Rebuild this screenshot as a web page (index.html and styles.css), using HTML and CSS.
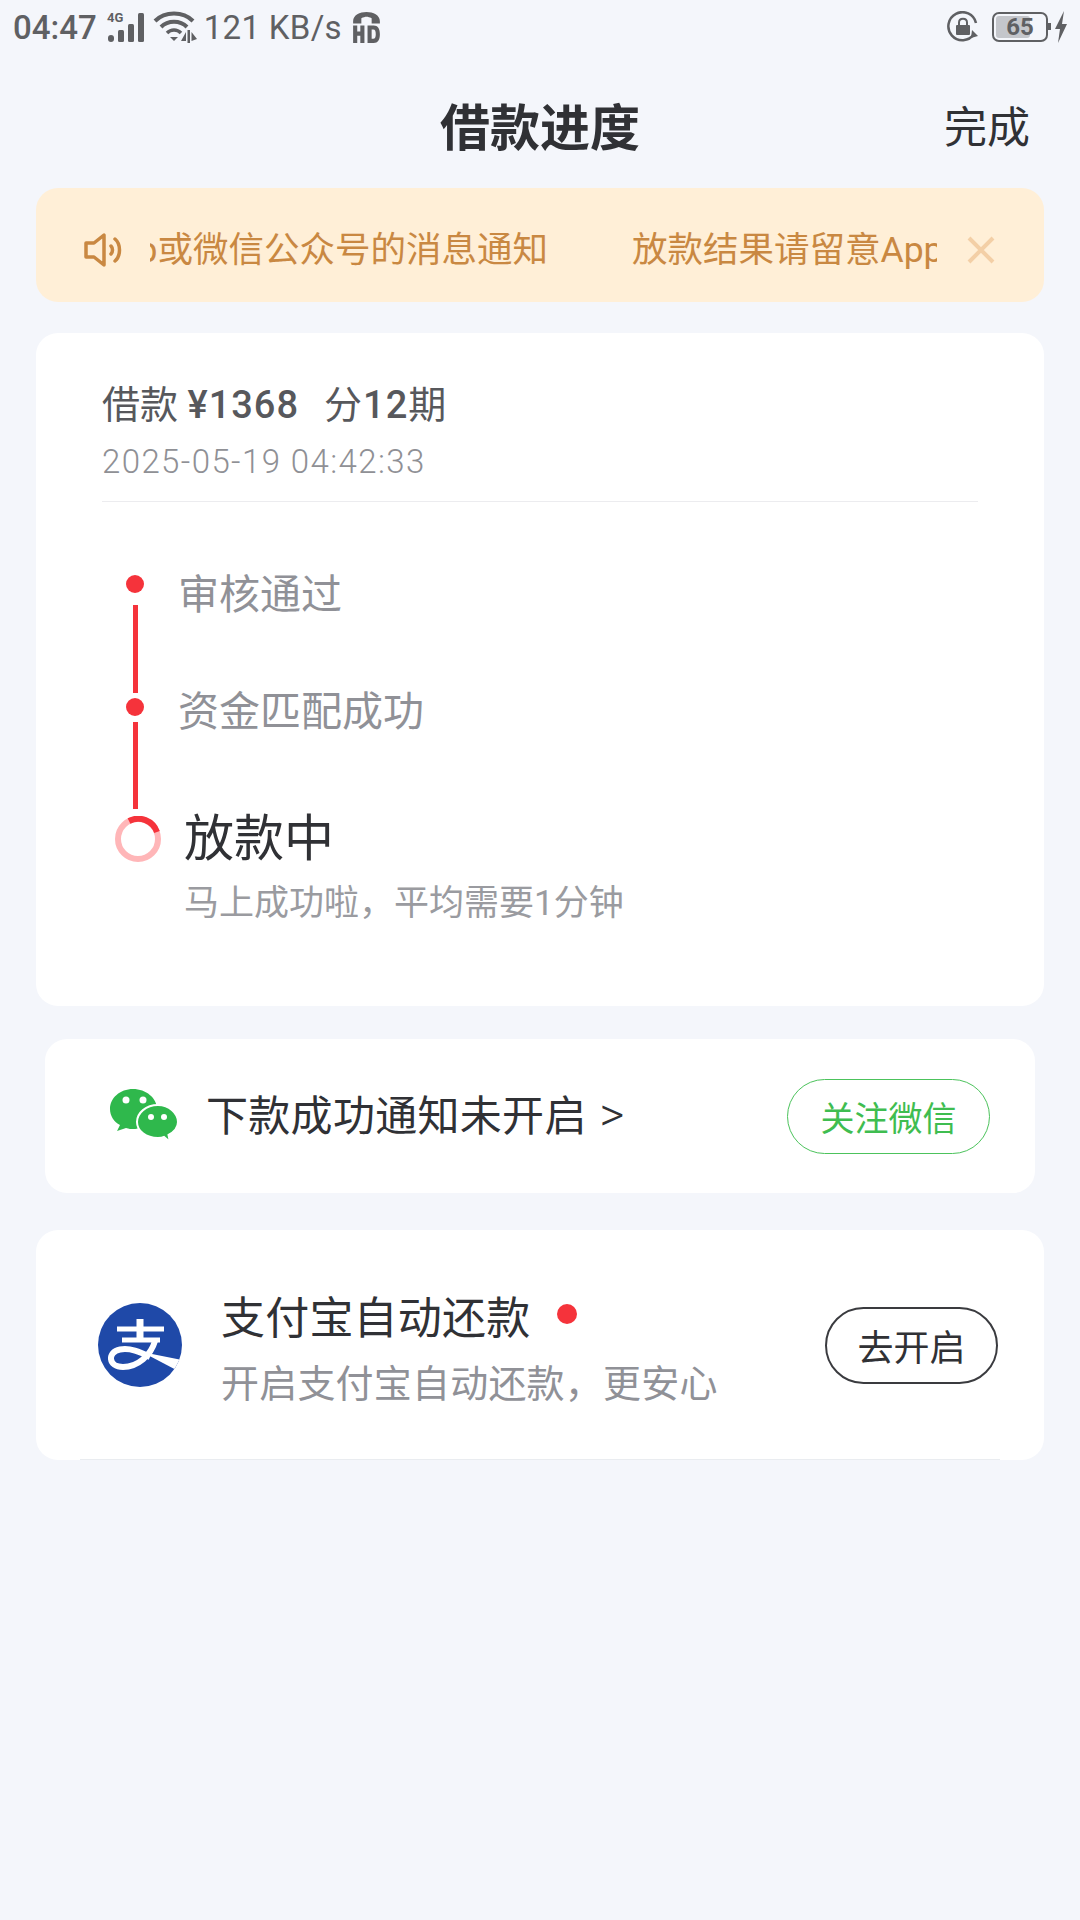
FILE: index.html
```html
<!DOCTYPE html>
<html lang="zh-CN">
<head>
    <meta charset="UTF-8">
    <meta name="viewport" content="width=device-width, initial-scale=1.0">
    <title>借款进度</title>
    <link rel="stylesheet" href="styles.css">
</head>
<body>
    <!-- Status bar -->
    <div class="status-bar">
        <div class="status-left">
            <span class="status-time">04:47</span>
            <svg class="icon-signal" viewBox="0 0 40 32">
                <text x="1" y="11" class="signal-label">4G</text>
                <rect x="2" y="24" width="6" height="7" rx="3" fill="#5f6063"/>
                <rect x="12" y="19" width="6" height="12" rx="1.5" fill="#5f6063"/>
                <rect x="22" y="13" width="6" height="18" rx="1.5" fill="#5f6063"/>
                <rect x="32" y="2" width="6" height="29" rx="1.5" fill="#5f6063"/>
            </svg>
            <svg class="icon-wifi" viewBox="0 0 44 32">
                <path d="M2 10 C12 0 30 0 40 10" fill="none" stroke="#5f6063" stroke-width="4"/>
                <path d="M8 16 C15 9 27 9 34 16" fill="none" stroke="#5f6063" stroke-width="4"/>
                <path d="M14 22 C18 18 24 18 28 22" fill="none" stroke="#5f6063" stroke-width="3.5"/>
                <path d="M17 26 L25 26 L21 30 Z" fill="#5f6063"/>
                <path d="M28 30 L33 21 L33 30 Z M34.500 19 L34.500 32 L37 32 L37 19 Z M38.500 21 L44 28 L38.500 30 Z" fill="#5f6063"/>
            </svg>
            <span class="status-speed">121 KB/s</span>
            <svg class="icon-hd" viewBox="0 0 30 34">
                <path d="M2 11 C2 -1 28 -1 28 11 L28 13 L20 13 L20 8 C16 6 14 6 10 8 L10 13 L2 13 Z" fill="#5f6063"/>
                <path d="M2 15 L6 15 L6 21 L9 21 L9 15 L13 15 L13 32 L9 32 L9 25 L6 25 L6 32 L2 32 Z" fill="#5f6063"/>
                <path d="M16 15 L22 15 C26 15 28 18 28 23.5 C28 29 26 32 22 32 L16 32 Z M20 19 L20 28 L21.500 28 C23.500 28 24 26 24 23.500 C24 21 23.500 19 21.500 19 Z" fill="#5f6063" fill-rule="evenodd"/>
            </svg>
        </div>
        <div class="status-right">
            <svg class="icon-lock" viewBox="0 0 32 32">
                <path d="M27 23 A14 14 0 1 1 29 12" fill="none" stroke="#5f6063" stroke-width="2.500"/>
                <path d="M25 19 L31 25 L24 27 Z" fill="#5f6063"/>
                <rect x="9" y="14" width="14" height="10" rx="1" fill="#5f6063"/>
                <path d="M12 14 L12 11.500 C12 6.500 20 6.500 20 11.500 L20 14" fill="none" stroke="#5f6063" stroke-width="2"/>
            </svg>
            <div class="battery">
                <div class="battery-fill"></div>
                <span class="battery-num">65</span>
            </div>
            <svg class="icon-charge" viewBox="0 0 20 32">
                <rect x="0" y="12" width="3" height="7" fill="#5f6063"/>
                <path d="M16 0 L7 18 L12 18 L10 32 L19 13 L14 13 Z" fill="#5f6063"/>
            </svg>
        </div>
    </div>

    <!-- Nav -->
    <div class="nav">
        <h1 class="nav-title">借款进度</h1>
        <span class="nav-done">完成</span>
    </div>

    <div class="page">
        <!-- Notice -->
        <div class="notice">
            <svg class="notice-icon" viewBox="0 0 42 34">
                <path d="M3 10 L11 10 L21 2 L21 32 L11 24 L3 24 Z" fill="none" stroke="#c98842" stroke-width="3.500" stroke-linejoin="round"/>
                <path d="M28 13 C30 15 30 19 28 21" fill="none" stroke="#c98842" stroke-width="3.500" stroke-linecap="round"/>
                <path d="M32 6 C38 11 38 23 32 28" fill="none" stroke="#c98842" stroke-width="3.500" stroke-linecap="round"/>
            </svg>
            <div class="notice-window">
                <div class="notice-track">
                    <span>放款结果请留意App或微信公众号的消息通知</span>
                    <span>放款结果请留意App或微信公众号的消息通知</span>
                </div>
            </div>
            <svg class="notice-close" viewBox="0 0 28 28">
                <path d="M2 2 L26 26 M26 2 L2 26" stroke="#f3cfa6" stroke-width="4"/>
            </svg>
        </div>

        <!-- Progress card -->
        <div class="card progress-card">
            <div class="loan-title">借款 <b>¥1368</b><span class="loan-term">分<b>12</b>期</span></div>
            <div class="loan-date">2025-05-19 04:42:33</div>
            <div class="divider"></div>

            <div class="steps">
                <div class="step">
                    <div class="rail">
                        <span class="dot"></span>
                        <span class="line line-first"></span>
                    </div>
                    <div class="step-text step-text-first">审核通过</div>
                </div>
                <div class="step">
                    <div class="rail">
                        <span class="dot"></span>
                        <span class="line line-second"></span>
                    </div>
                    <div class="step-text">资金匹配成功</div>
                </div>
                <div class="step step-current">
                    <svg class="ring" viewBox="0 0 46 46">
                        <circle cx="23" cy="23" r="20" fill="none" stroke="#ffb6b8" stroke-width="6"/>
                        <path d="M14 5 A20 20 0 0 1 42 16" fill="none" stroke="#f5333b" stroke-width="6"/>
                    </svg>
                    <div>
                        <div class="current-title">放款中</div>
                        <div class="current-sub">马上成功啦，平均需要1分钟</div>
                    </div>
                </div>
            </div>
        </div>

        <!-- WeChat -->
        <div class="card wechat-card">
            <svg class="wechat-icon" viewBox="0 0 70 58">
                <path d="M25 2 C12 2 2 11 2 22 C2 29 6 35 12 38 L9 44 L18 41 C21 42 23 42 25 42 C38 42 49 33 49 22 C49 11 38 2 25 2 Z" fill="#2fb84c"/>
                <path d="M50 18 C38 18 29 26 29 35 C29 44 38 51 50 51 C52 51 54 51 56 50 L62 55 L60.500 48 C66 45 70 40 70 35 C70 26 61 18 50 18 Z" fill="#2fb84c" stroke="#fff" stroke-width="2"/>
                <circle cx="18" cy="13" r="3.500" fill="#fff"/>
                <circle cx="35" cy="13" r="3.500" fill="#fff"/>
                <circle cx="43" cy="30" r="3" fill="#fff"/>
                <circle cx="56" cy="30" r="3" fill="#fff"/>
            </svg>
            <div class="wechat-text">下款成功通知未开启 <span class="wechat-arrow">&gt;</span></div>
            <div class="btn-follow">关注微信</div>
        </div>

        <!-- Alipay -->
        <div class="card alipay-card">
            <svg class="alipay-icon" viewBox="0 0 84 84">
                <defs>
                    <clipPath id="alipayClip"><circle cx="42" cy="42" r="42"/></clipPath>
                </defs>
                <circle cx="42" cy="42" r="42" fill="#1f49a8"/>
                <g clip-path="url(#alipayClip)">
                    <g fill="none" stroke="#fff">
                        <path d="M19 26 L66 26" stroke-width="5"/>
                        <path d="M42 16 L42 37" stroke-width="7"/>
                        <path d="M24 37 L62 37" stroke-width="5"/>
                        <path d="M57 38 C53 52 40 64 25 64 C10 64 9 49 22 46.500 C32 44.500 42 49 52 54" stroke-width="6"/>
                    </g>
                    <path d="M44 49 L84 57 L84 70 Z" fill="#fff"/>
                </g>
            </svg>
            <div class="alipay-info">
                <div class="alipay-title">支付宝自动还款<span class="red-dot"></span></div>
                <div class="alipay-sub">开启支付宝自动还款，更安心</div>
            </div>
            <div class="btn-open">去开启</div>
        </div>
    </div>
</body>
</html>
```

FILE: styles.css
```css
* {
    margin: 0;
    padding: 0;
    box-sizing: border-box;
    font-family: Roboto, 'Noto Sans CJK SC', sans-serif;
}

body {
    background-color: #f4f6fb;
    color: #303135;
    width: 1080px;
    min-height: 1920px;
}

/* Status bar */
.status-bar {
    height: 54px;
    padding: 0 12px 0 13px;
    display: flex;
    justify-content: space-between;
    align-items: center;
    color: #5f6063;
}

.status-left,
.status-right {
    display: flex;
    align-items: center;
}

.status-time {
    font-size: 33px;
    font-weight: 500;
    line-height: 1;
}

.status-speed {
    font-size: 33px;
    line-height: 1;
    margin-left: 7px;
    letter-spacing: 0.3px;
}

.icon-signal {
    width: 40px;
    height: 32px;
    margin-left: 9px;
    overflow: visible;
}

.signal-label {
    font-size: 13px;
    font-weight: 700;
    fill: #5f6063;
}

.icon-wifi {
    width: 44px;
    height: 32px;
    margin-left: 7px;
}

.icon-hd {
    width: 31px;
    height: 35px;
    margin-left: 9px;
}

.icon-lock {
    width: 32px;
    height: 32px;
}

.battery {
    position: relative;
    width: 56px;
    height: 30px;
    margin-left: 13px;
    border: 2.5px solid #5f6063;
    border-radius: 7px;
    display: flex;
    align-items: center;
    justify-content: center;
}

.battery-fill {
    position: absolute;
    left: 2px;
    top: 2px;
    bottom: 2px;
    width: 65%;
    background-color: #c4c6cb;
    border-radius: 3px;
}

.battery-num {
    position: relative;
    font-size: 24px;
    font-weight: 700;
    line-height: 1;
}

.icon-charge {
    width: 20px;
    height: 32px;
}

/* Nav */
.nav {
    position: relative;
    height: 134px;
    display: flex;
    align-items: center;
    justify-content: center;
}

.nav-title {
    font-size: 50px;
    font-weight: 700;
    line-height: 1;
    margin-top: 16px;
}

.nav-done {
    position: absolute;
    right: 50px;
    top: 53px;
    font-size: 43px;
    line-height: 1;
}

.page {
    padding: 0 36px;
}

/* Notice */
.notice {
    height: 114px;
    background-color: #ffefd7;
    border-radius: 22px;
    display: flex;
    align-items: center;
    padding-left: 47px;
    padding-top: 10px;
    color: #c98842;
}

.notice-icon {
    width: 42px;
    height: 34px;
    flex-shrink: 0;
}

.notice-window {
    width: 787px;
    margin-left: 25px;
    overflow: hidden;
    flex-shrink: 0;
}

.notice-track {
    display: flex;
    gap: 84px;
    font-size: 35.5px;
    line-height: 48px;
    white-space: nowrap;
    margin-left: -304px;
}

.notice-close {
    width: 28px;
    height: 28px;
    margin-left: 30px;
}

/* Cards */
.card {
    background-color: #fff;
    border-radius: 22px;
}

.progress-card {
    height: 673px;
    margin-top: 31px;
    padding: 49px 66px 0;
}

.loan-title {
    font-size: 38px;
    line-height: 46px;
    color: #57585c;
}

.loan-title b {
    font-weight: 500;
    letter-spacing: 1px;
}

.loan-term {
    margin-left: 25px;
    letter-spacing: 1px;
}

.loan-date {
    font-size: 33px;
    font-weight: 300;
    line-height: 40px;
    margin-top: 14px;
    color: #8f9095;
    letter-spacing: 1.4px;
}

.divider {
    height: 1px;
    background-color: #ececef;
    margin-top: 19px;
    width: 876px;
}

.steps {
    margin-top: 73px;
    margin-left: 13px;
}

.step {
    display: flex;
}

.rail {
    width: 40px;
    display: flex;
    flex-direction: column;
    align-items: center;
    margin-right: 23px;
}

.dot {
    width: 18px;
    height: 18px;
    border-radius: 50%;
    background-color: #f5333b;
}

.line {
    width: 5px;
    background-color: #f5333b;
}

.line-first {
    height: 88px;
    margin-top: 12px;
    margin-bottom: 5px;
}

.line-second {
    height: 87px;
    margin-top: 6px;
    margin-bottom: 7px;
}

.step-text {
    font-size: 41px;
    line-height: 48px;
    color: #909197;
    margin-top: -10px;
}

.step-text-first {
    margin-top: -4px;
}

.step-current {
    align-items: flex-start;
}

.ring {
    width: 46px;
    height: 46px;
    margin-right: 23px;
    flex-shrink: 0;
}

.current-title {
    font-size: 50px;
    line-height: 60px;
    margin-top: -7px;
}

.current-sub {
    font-size: 35px;
    line-height: 44px;
    margin-top: 13px;
    color: #9a9ba0;
}

/* WeChat */
.wechat-card {
    height: 154px;
    margin: 33px 9px 0;
    padding: 0 45px 0 63px;
    display: flex;
    align-items: center;
}

.wechat-icon {
    width: 70px;
    height: 58px;
    flex-shrink: 0;
}

.wechat-text {
    font-size: 42px;
    line-height: 48px;
    margin-left: 28px;
    letter-spacing: 0.3px;
}

.wechat-arrow {
    font-size: 48px;
    font-weight: 300;
    margin-left: 2px;
}

.btn-follow {
    margin-left: auto;
    width: 203px;
    height: 75px;
    border: 1px solid #4cc35c;
    border-radius: 38px;
    color: #3fbd50;
    font-size: 34px;
    display: flex;
    align-items: center;
    justify-content: center;
}

/* Alipay */
.alipay-card {
    position: relative;
    height: 230px;
    margin-top: 37px;
    padding: 0 46px 0 62px;
    display: flex;
    align-items: center;
}

.alipay-card::after {
    content: '';
    position: absolute;
    left: 44px;
    right: 44px;
    bottom: 0;
    height: 1px;
    background-color: #e9ecf0;
}

.alipay-icon {
    width: 84px;
    height: 84px;
    flex-shrink: 0;
}

.alipay-info {
    margin-left: 39px;
    padding-top: 7px;
}

.alipay-title {
    display: flex;
    align-items: center;
    font-size: 44px;
    line-height: 56px;
    letter-spacing: 0.2px;
}

.red-dot {
    width: 20px;
    height: 20px;
    margin-left: 27px;
    margin-bottom: 10px;
    border-radius: 50%;
    background-color: #f5333b;
}

.alipay-sub {
    font-size: 38px;
    line-height: 46px;
    margin-top: 14px;
    color: #909197;
    letter-spacing: 0.2px;
}

.btn-open {
    margin-left: auto;
    width: 173px;
    height: 77px;
    border: 2px solid #3a3b3f;
    border-radius: 39px;
    font-size: 36px;
    display: flex;
    align-items: center;
    justify-content: center;
}
```
